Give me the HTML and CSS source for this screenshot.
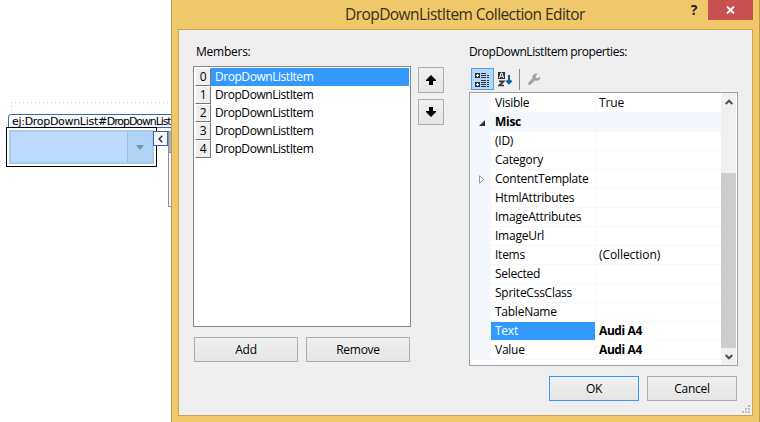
FILE: index.html
```
<!DOCTYPE html>
<html lang="en">
<head>
<meta charset="utf-8">
<title>DropDownListItem Collection Editor</title>
<link rel="stylesheet" href="styles.css">
</head>
<body>
<main class="screen">
  <section class="designer">
    <div class="form-outline"></div>
    <div class="control-tag"><span class="tag-text">ej:DropDownList#</span><span class="tag-id">DropDownList</span></div>
    <div class="control-row">
      <div class="selection"><div class="dropdown"><span class="dropdown-arrow"><svg width="8" height="5"><path d="M0 0h8L4 5z" fill="#6f94b6"/></svg></span></div></div>
      <div class="smart-tag"><svg width="5" height="8"><path d="M4.3.7L1 4l3.3 3.3" fill="none" stroke="#26364c" stroke-width="1.5"/></svg></div>
      <div class="task-panel"></div>
    </div>
  </section>
  <section class="dialog">
    <header class="titlebar">
      <h1 class="title">DropDownListItem Collection Editor</h1>
      <span class="help">?</span>
      <span class="close"><svg width="9" height="8"><path d="M1 .5l7 7M8 .5l-7 7" stroke="#fff" stroke-width="1.8"/></svg></span>
    </header>
    <div class="client">
      <div class="panels">
        <div class="members">
          <div class="caption members-caption">Members:</div>
          <div class="list">
            <div class="item item-selected"><span class="index">0</span><span class="item-name">DropDownListItem</span></div>
            <div class="item"><span class="index">1</span><span class="item-name">DropDownListItem</span></div>
            <div class="item"><span class="index">2</span><span class="item-name">DropDownListItem</span></div>
            <div class="item"><span class="index">3</span><span class="item-name">DropDownListItem</span></div>
            <div class="item"><span class="index">4</span><span class="item-name">DropDownListItem</span></div>
          </div>
          <div class="member-actions"><div class="button">Add</div><div class="button">Remove</div></div>
        </div>
        <div class="order">
          <div class="button order-button"><svg width="10" height="10"><path d="M5 0l5 5v1H7v4H3V6H0V5z"/></svg></div>
          <div class="button order-button"><svg width="10" height="10"><path d="M5 10l5-5V4H7V0H3v4H0v1z"/></svg></div>
        </div>
        <div class="properties">
          <div class="caption properties-caption">DropDownListItem properties:</div>
          <div class="toolbar">
            <span class="tool tool-active"><svg width="15" height="15" shape-rendering="crispEdges"><path d="M0 1h5v5H0zM0 10h5v5H0z" fill="#333"/><path d="M1 3h3v1H1zM2 2h1v3H2zM1 12h3v1H1zM2 11h1v3H2z" fill="#fff"/><path d="M6 1h5v1H6zM6 3h5v1H6zM6 5h5v1H6zM6 8h5v1H6zM6 10h5v1H6zM6 12h5v1H6zM6 14h5v1H6zM12 3h2v1h-2zM12 5h2v1h-2zM12 8h2v1h-2zM12 10h2v1h-2zM12 12h2v1h-2zM12 14h2v1h-2z" fill="#333"/></svg></span>
            <span class="tool"><svg width="15" height="15"><path d="M0 0h7v7H0z" fill="#333"/><path d="M1.5 6l1.5-5h1l1.5 5M2.3 4.3h2.4" fill="none" stroke="#fff"/><path d="M1 9.3h4.7L1.3 13.5H6" fill="none" stroke="#333" stroke-width="1.7"/><path d="M11 3v8M8.5 8.5L11 11.2l2.6-2.7" fill="none" stroke="#00639c" stroke-width="2"/></svg></span>
            <span class="tool-divider"></span>
            <span class="tool"><svg width="13" height="13"><path d="M12.2 3.2L10 5.2 8 4.8 7.6 3 9.7.7C7.5-.1 5.3.9 4.6 3c-.3.9-.2 1.5 0 2.2L.6 9.4c-1.4 1.6.5 3.7 2.2 2.2l4.1-4c.8.3 1.7.3 2.6 0 2.1-.6 3.2-2.4 2.7-4.4z" fill="#a2a2a2"/></svg></span>
          </div>
          <div class="grid">
            <div class="rows">
              <div class="row"><span class="gutter"></span><span class="name">Visible</span><span class="value">True</span></div>
              <div class="row category"><span class="gutter"><svg width="6" height="6"><path d="M6 0v6H0z" fill="#333"/></svg></span><span class="name">Misc</span></div>
              <div class="row"><span class="gutter"></span><span class="name">(ID)</span><span class="value"></span></div>
              <div class="row"><span class="gutter"></span><span class="name">Category</span><span class="value"></span></div>
              <div class="row"><span class="gutter"><svg width="6" height="9"><path d="M.5.8v7.4l4.3-3.7z" fill="#fff" stroke="#999"/></svg></span><span class="name">ContentTemplate</span><span class="value"></span></div>
              <div class="row"><span class="gutter"></span><span class="name">HtmlAttributes</span><span class="value"></span></div>
              <div class="row"><span class="gutter"></span><span class="name">ImageAttributes</span><span class="value"></span></div>
              <div class="row"><span class="gutter"></span><span class="name">ImageUrl</span><span class="value"></span></div>
              <div class="row"><span class="gutter"></span><span class="name">Items</span><span class="value">(Collection)</span></div>
              <div class="row"><span class="gutter"></span><span class="name">Selected</span><span class="value"></span></div>
              <div class="row"><span class="gutter"></span><span class="name">SpriteCssClass</span><span class="value"></span></div>
              <div class="row"><span class="gutter"></span><span class="name">TableName</span><span class="value"></span></div>
              <div class="row"><span class="gutter"></span><span class="name name-selected">Text</span><span class="value bold">Audi A4</span></div>
              <div class="row"><span class="gutter"></span><span class="name">Value</span><span class="value bold">Audi A4</span></div>
            </div>
            <div class="scrollbar">
              <svg width="8" height="6"><path d="M.7 5L4 1.7 7.3 5" fill="none" stroke="#505050" stroke-width="2"/></svg>
              <div class="thumb"></div>
              <svg width="8" height="6"><path d="M.7 1L4 4.3 7.3 1" fill="none" stroke="#505050" stroke-width="2"/></svg>
            </div>
          </div>
        </div>
      </div>
      <footer class="footer"><div class="button button-default">OK</div><div class="button">Cancel</div></footer>
      <svg class="grip" width="8" height="8" shape-rendering="crispEdges"><path d="M6 0h2v2H6zM3 3h2v2H3zM6 3h2v2H6zM0 6h2v2H0zM3 6h2v2H3zM6 6h2v2H6z" fill="#bcbcbc"/></svg>
    </div>
  </section>
</main>
</body>
</html>
```
FILE: styles.css
```
* { box-sizing: border-box; }
body {
  margin: 0;
  background: #fff;
  color: #000;
  font: 12px/18px "Open Sans", "Noto Sans", sans-serif;
  letter-spacing: -0.25px;
}
svg { display: block; flex: none; }
.screen { display: flex; width: 760px; height: 422px; overflow: hidden; }

.designer { width: 171px; flex: none; overflow: hidden; padding-top: 102px; }
.form-outline {
  height: 12px;
  margin-left: 11px;
  background:
    repeating-linear-gradient(90deg, #c8c8c8 0 1px, transparent 1px 4px) 0 0 / 100% 1px no-repeat,
    repeating-linear-gradient(#c8c8c8 0 1px, transparent 1px 4px) 0 0 / 1px 100% no-repeat;
}
.control-tag {
  width: 180px;
  height: 14px;
  margin-left: 8px;
  padding-left: 3px;
  border: 1px solid #3567b5;
  border-radius: 3px 0 0 0;
  background: linear-gradient(#fff, #eef2f9);
  font: 11px/13px "DejaVu Sans", sans-serif;
  white-space: nowrap;
}
.tag-text { letter-spacing: -0.3px; }
.tag-id { letter-spacing: -1.1px; }
.control-row { display: flex; height: 80px; margin-left: 6px; margin-top: -1px; }
.selection { width: 151px; height: 40px; border: 1px solid #000; padding: 2px; background: #fff; flex: none; }
.dropdown {
  height: 34px;
  display: flex;
  justify-content: flex-end;
  background: #bddbff;
  border: 2px solid #a6cbf0;
}
.dropdown-arrow {
  width: 25px;
  border-left: 1px solid #9abfe2;
  background: #b0d2f3;
  display: flex;
  align-items: center;
  justify-content: center;
}
.smart-tag {
  width: 15px;
  height: 15px;
  margin: 4px 0 0 -4px;
  border: 1px solid #3567b5;
  background: #f4f6fa;
  display: flex;
  align-items: center;
  justify-content: center;
  flex: none;
}
.task-panel {
  width: 8px;
  height: 76px;
  margin-top: 4px;
  border: 1px solid #8492a8;
  background: linear-gradient(#a7b3c6 0 20px, #8492a8 20px 21px, #fff 21px);
  flex: none;
}

.dialog {
  width: 589px;
  height: 422px;
  flex: none;
  padding: 0 6px;
  border: solid #bd9a54;
  border-width: 0 1px;
  background: #f0c869;
}
.titlebar { height: 29px; display: flex; align-items: flex-start; }
.title {
  margin: 0 0 0 167px;
  width: 252px;
  font-size: 15.5px;
  line-height: 29px;
  font-weight: 400;
  letter-spacing: -0.56px;
  color: #382f1b;
  white-space: nowrap;
}
.help { width: 16px; margin-left: 89px; font-size: 14px; font-weight: 700; line-height: 20px; text-align: center; color: #222; }
.close { width: 45px; height: 20px; margin-left: auto; background: #c75050; display: flex; align-items: center; justify-content: center; }

.client { position: relative; height: 387px; border: 1px solid #c9a455; background: #efefef; padding: 12px 14px 0; }
.panels { display: flex; height: 324px; }
.caption { height: 20px; line-height: 19px; white-space: nowrap; }
.members { width: 218px; flex: none; }
.members-caption { padding-left: 3px; }
.properties-caption { letter-spacing: -0.43px; }
.list { height: 261px; margin-top: 4px; border: 1px solid #828790; background: #fff; padding: 1px; }
.item { display: flex; height: 18px; }
.index {
  width: 16px;
  background: #efefef;
  border: 1px solid;
  border-color: #fff #777 #777 #fff;
  text-align: center;
  line-height: 16px;
}
.item-name { flex: 1; padding-left: 4px; white-space: nowrap; letter-spacing: -0.45px; }
.item-selected .item-name { background: #3399ff; color: #fff; }
.button {
  height: 25px;
  border: 1px solid #acacac;
  background: linear-gradient(#f0f0f0, #e5e5e5);
  display: flex;
  align-items: center;
  justify-content: center;
}
.member-actions { display: grid; grid-template-columns: 104px 104px; gap: 8px; padding: 10px 1px 0; }
.order { display: flex; flex-direction: column; gap: 6px; padding: 25px 0 0 7px; width: 58px; flex: none; }
.order-button { width: 26px; height: 26px; }

.properties { width: 269px; flex: none; }
.toolbar { display: flex; height: 30px; padding: 6px 0 0 2px; }
.tool { width: 23px; height: 22px; display: flex; align-items: center; justify-content: center; }
.tool-active { background: #b3d7f8; border: 1px solid #569de5; }
.tool-divider { width: 1px; height: 21px; margin: 1px 3px 0 2px; background: #888; }
.grid { display: flex; height: 274px; border: 1px solid #a0a0a0; background: #fff; }
.rows { width: 251px; flex: none; padding-top: 1px; }
.row { display: flex; height: 19px; line-height: 18px; white-space: nowrap; }
.gutter { width: 21px; padding-left: 2px; background: #f4f7fc; display: flex; align-items: center; justify-content: center; flex: none; }
.name { width: 105px; padding-left: 4px; border-right: 1px solid #f4f7fc; border-bottom: 1px solid #f4f7fc; }
.value { flex: 1; padding-left: 3px; border-bottom: 1px solid #f4f7fc; letter-spacing: -0.1px; }
.category { background: #f4f7fc; font-weight: 700; }
.category .name { letter-spacing: -0.3px; }
.name-selected { background: #3399ff; color: #fff; }
.bold { font-weight: 700; letter-spacing: -0.4px; }
.scrollbar { width: 15px; background: #f0f0f0; display: flex; flex-direction: column; align-items: center; padding: 6px 0 5px; }
.thumb { width: 15px; height: 175px; margin: auto 0 6px; background: #cdcdcd; }
.footer { display: flex; justify-content: flex-end; gap: 8px; padding: 10px 1px 0 0; }
.footer .button { width: 90px; }
.footer .button-default { border-color: #3399ff; }
.grip { position: absolute; right: 2px; bottom: 2px; }
```
